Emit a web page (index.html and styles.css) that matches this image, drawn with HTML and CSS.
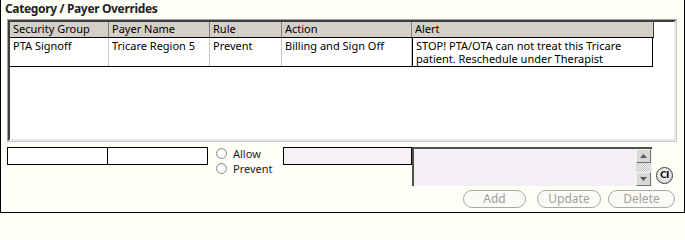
FILE: index.html
```html
<!DOCTYPE html>
<html>
<head>
<meta charset="utf-8">
<link rel="stylesheet" href="styles.css">
</head>
<body>
<div class="panel">
  <div class="title">Category / Payer Overrides</div>
  <div class="grid-frame">
    <div class="grid">
      <div class="row head">
        <div class="cell c1">Security Group</div>
        <div class="cell c2">Payer Name</div>
        <div class="cell c3">Rule</div>
        <div class="cell c4">Action</div>
        <div class="cell c5">Alert</div>
      </div>
      <div class="row data">
        <div class="cell c1">PTA Signoff</div>
        <div class="cell c2">Tricare Region 5</div>
        <div class="cell c3">Prevent</div>
        <div class="cell c4">Billing and Sign Off</div>
        <div class="cell c5">STOP! PTA/OTA can not treat this Tricare patient. Reschedule under Therapist</div>
      </div>
    </div>
  </div>
  <div class="editor">
    <div class="box b1"></div>
    <div class="box b2"></div>
    <div class="radios">
      <label class="radio"><span class="dot"></span>Allow</label>
      <label class="radio"><span class="dot"></span>Prevent</label>
    </div>
    <div class="box b3"></div>
    <div class="memo">
      <div class="memo-body"></div>
      <div class="scroll">
        <div class="sbtn"><svg width="9" height="6" viewBox="0 0 9 6"><path d="M1 5 L4.5 1 L8 5 Z" fill="#5a5a5a"/></svg></div>
        <div class="track"></div>
        <div class="sbtn"><svg width="9" height="6" viewBox="0 0 9 6"><path d="M1 1 L4.5 5 L8 1 Z" fill="#5a5a5a"/></svg></div>
      </div>
    </div>
    <div class="ci">CI</div>
  </div>
  <div class="buttons">
    <div class="btn add">Add</div>
    <div class="btn upd">Update</div>
    <div class="btn del">Delete</div>
  </div>
</div>
</body>
</html>
```
FILE: styles.css
```css
html, body {
  margin: 0;
  padding: 0;
  background: #fffff7;
}
body {
  font-family: "Noto Sans", "DejaVu Sans", sans-serif;
  font-size: 11px;
  color: #000;
}
.panel {
  width: 685px;
  height: 213px;
  box-sizing: border-box;
  border-left: 1px solid #000;
  border-right: 1px solid #000;
  border-bottom: 1px solid #000;
  background: #fffff7;
  overflow: hidden;
}
.title {
  height: 19px;
  line-height: 17px;
  padding-left: 4px;
  font-weight: bold;
  font-size: 12px;
  letter-spacing: -0.35px;
  color: #222;
}
.grid-frame {
  margin-left: 6px;
  width: 670px;
  height: 123px;
  box-sizing: border-box;
  border-top: 1px solid #a0a0a0;
  border-left: 1px solid #a0a0a0;
  border-right: 1px solid #c8c8c8;
  border-bottom: 1px solid #c8c8c8;
  background: #fff;
}
.grid {
  height: 100%;
  box-sizing: border-box;
  border-top: 2px solid #404040;
  border-left: 2px solid #404040;
  border-right: 2px solid #e8e8e8;
  border-bottom: 2px solid #e8e8e8;
  background: #fff;
}
.row {
  display: flex;
  width: 643px;
}
.head {
  height: 15px;
  background: #d4d0c8;
  border-bottom: 1px solid #000;
  border-right: 1px solid #404040;
}
.head .cell {
  line-height: 14px;
  border-right: 1px solid #808080;
}
.data {
  height: 28px;
  border-bottom: 1px solid #000;
}
.data .cell {
  line-height: 13px;
  padding-top: 1px;
  border-right: 1px solid #c8c8c8;
}
.cell {
  box-sizing: border-box;
  padding-left: 3px;
  white-space: nowrap;
  overflow: hidden;
}
.c1 { width: 99px; }
.c2 { width: 101px; }
.c3 { width: 72px; }
.c4 { width: 130px; }
.c5 { width: 241px; }
.head .c5 { border-right: none; }
.data .c5 {
  white-space: normal;
  border: 1px solid #000;
  border-bottom: none;
  margin-top: -1px;
  padding-top: 1px;
  line-height: 13px;
}
.editor {
  display: flex;
  margin-top: 5px;
  margin-left: 6px;
  height: 40px;
}
.box {
  box-sizing: border-box;
  height: 18px;
  border: 1px solid #000;
  background: #fff;
}
.b1 { width: 101px; }
.b2 { width: 101px; margin-left: -1px; }
.b3 {
  width: 129px;
  background: #f5f1f5;
}
.radios {
  display: flex;
  flex-direction: column;
  width: 75px;
  padding-left: 8px;
  box-sizing: border-box;
}
.radio {
  display: flex;
  align-items: center;
  height: 15px;
  font-size: 11px;
  color: #1a1a1a;
  line-height: 15px;
}
.radio:first-child { margin-top: -1px; }
.dot {
  width: 9px;
  height: 9px;
  border-radius: 50%;
  border: 1px solid #8a8a8a;
  background: radial-gradient(circle at 50% 60%, #ffffff 40%, #e4e4e4 100%);
  margin-right: 6px;
  box-sizing: content-box;
}
.memo {
  display: flex;
  box-sizing: border-box;
  width: 240px;
  height: 39px;
  border-top: 2px solid #505050;
  border-left: 2px solid #505050;
  background: #f3eff5;
}
.memo-body { flex: 1; }
.scroll {
  width: 15px;
  display: flex;
  flex-direction: column;
  margin-right: 1px;
}
.sbtn {
  height: 14px;
  box-sizing: border-box;
  background: #d8d8d8;
  border: 1px solid;
  border-color: #f4f4f4 #707070 #707070 #f4f4f4;
  display: flex;
  align-items: center;
  justify-content: center;
}
.track {
  flex: 1;
  background-color: #e6e6e6;
  background-image: repeating-conic-gradient(#c4c4c4 0 25%, #f4f4f4 0 50%);
  background-size: 2px 2px;
}
.ci {
  width: 15px;
  height: 15px;
  margin-left: 4px;
  margin-top: 20px;
  border-radius: 50%;
  border: 1.5px solid #3a3a3a;
  background: radial-gradient(circle at 40% 35%, #ffffff 10%, #cfcfcf 90%);
  font-family: "DejaVu Sans", sans-serif;
  font-weight: bold;
  font-size: 9px;
  line-height: 15px;
  text-align: center;
  color: #111;
  letter-spacing: -0.5px;
}
.buttons {
  display: flex;
  justify-content: flex-end;
  gap: 11px;
  margin-top: 3px;
  padding-right: 9px;
}
.btn {
  box-sizing: border-box;
  height: 18px;
  border: 1px solid #a8a8a8;
  border-radius: 9px;
  background: #fbfbf5;
  color: #a0a0a0;
  font-size: 12px;
  line-height: 16px;
  text-align: center;
}
.add { width: 63px; }
.upd { width: 64px; margin-right: -4px; }
.del { width: 67px; }
```
